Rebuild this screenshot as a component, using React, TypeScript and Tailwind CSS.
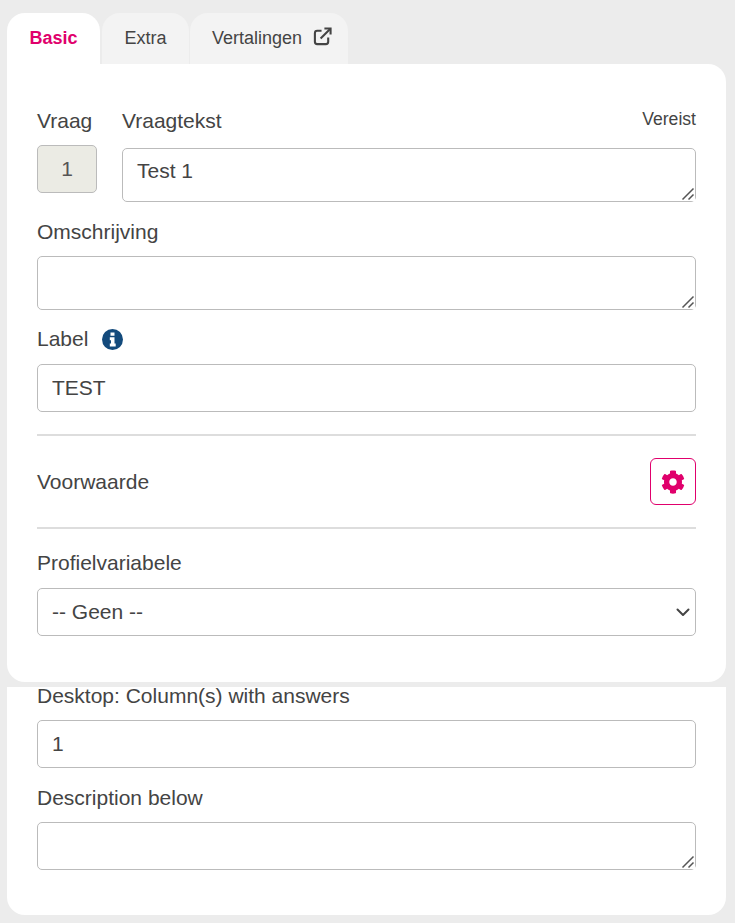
import { FaCog } from "react-icons/fa";

const fieldClass =
  "block w-full rounded-[5px] border border-[#bbbbbb] bg-white px-[14px] text-[21px] text-[#444444] outline-none";

function Grip() {
  return (
    <svg
      viewBox="0 0 14 14"
      className="pointer-events-none absolute bottom-[1px] right-[1px] h-[14px] w-[14px] bg-white"
      stroke="#555555"
      strokeWidth="1.5"
      fill="none"
    >
      <path d="M1.5 12.5 12.5 1.5M7.5 12.5l5-5" />
    </svg>
  );
}

function Area({ value = "", height }: { value?: string; height: string }) {
  return (
    <div className="relative">
      <textarea
        defaultValue={value}
        className={`${fieldClass} ${height} py-[8px] leading-[28px]`}
      />
      <Grip />
    </div>
  );
}

export default function App() {
  return (
    <div className="h-[923px] w-[735px] overflow-hidden bg-[#ececec] pl-[7px] pr-[9px] pt-[13px] font-['Liberation_Sans',Arial,sans-serif] text-[#444444]">
      <div className="flex h-[51px] text-[18px]">
        <div className="flex w-[93px] items-center justify-center rounded-t-[18px] bg-white font-bold text-[#e0006c]">
          Basic
        </div>
        <div className="ml-[2px] flex w-[87px] items-center justify-center rounded-t-[18px] bg-[#f3f3f3]">
          Extra
        </div>
        <div className="ml-[1px] flex w-[158px] items-center gap-[11px] rounded-t-[18px] bg-[#f3f3f3] pl-[22px]">
          Vertalingen
          <svg
            viewBox="0 0 20 20"
            className="mb-[4px] h-[19px] w-[19px]"
            fill="none"
            stroke="#444444"
            strokeWidth="2.2"
          >
            <path d="M16 11v4.500a2.500 2.500 0 0 1-2.500 2.500h-9A2.500 2.500 0 0 1 2 15.500v-9A2.500 2.500 0 0 1 4.500 4H9" />
            <path d="M8 12 18 2" />
            <path d="M12 1.500h6.500V8" />
          </svg>
        </div>
      </div>

      <div className="h-[618px] rounded-[18px] rounded-tl-none bg-white px-[30px] pt-[43px]">
        <div className="flex gap-[25px]">
          <div className="w-[60px] shrink-0">
            <div className="h-[28px] text-[21px] leading-[28px]">Vraag</div>
            <div className="mt-[10px] flex h-[48px] items-center justify-center rounded-[5px] border border-[#bbbbbb] bg-[#ebebe4] text-[21px] text-[#555555]">
              1
            </div>
          </div>
          <div className="min-w-0 flex-1">
            <div className="flex h-[28px] items-start justify-between">
              <span className="text-[21px] leading-[28px]">Vraagtekst</span>
              <span className="text-[17.6px] leading-[24px]">Vereist</span>
            </div>
            <div className="mt-[13px]">
              <Area value="Test 1" height="h-[54px]" />
            </div>
          </div>
        </div>

        <div className="mt-[16px] h-[28px] text-[21px] leading-[28px]">Omschrijving</div>
        <div className="mt-[10px]">
          <Area height="h-[54px]" />
        </div>

        <div className="mt-[15px] flex h-[28px] items-center gap-[14px] text-[21px]">
          Label
          <svg viewBox="0 0 21 21" className="h-[21px] w-[21px]">
            <circle cx="10.500" cy="10.500" r="10.500" fill="#134a7c" />
            <path
              fill="#ffffff"
              d="M8.500 3.500h4v3.200h-4zM7.800 8.200h4.700v6.300h1.200v3H7.800v-3H9v-3.300H7.800z"
            />
          </svg>
        </div>
        <input type="text" defaultValue="TEST" className={`${fieldClass} mt-[11px] h-[48px]`} />

        <div className="mt-[22px] border-t-2 border-[#dddddd]" />
        <div className="mt-[22px] flex h-[47px] items-center justify-between">
          <span className="text-[21px]">Voorwaarde</span>
          <button className="flex h-[47px] w-[46px] items-center justify-center rounded-[6px] border border-[#e0006c] text-[#e0006c]">
            <FaCog className="text-[24px]" />
          </button>
        </div>
        <div className="mt-[22px] border-t-2 border-[#dddddd]" />

        <div className="mt-[20px] h-[28px] text-[21px] leading-[28px]">Profielvariabele</div>
        <div className="relative mt-[11px]">
          <select className={`${fieldClass} h-[48px] appearance-none`}>
            <option>-- Geen --</option>
          </select>
          <svg
            viewBox="0 0 16 16"
            className="pointer-events-none absolute right-[5px] top-[16px] h-[16px] w-[16px]"
            fill="none"
            stroke="#444444"
            strokeWidth="2"
            strokeLinecap="round"
            strokeLinejoin="round"
          >
            <path d="M2.500 5.500 8 11l5.500-5.500" />
          </svg>
        </div>
      </div>

      <div className="mt-[5px] h-[228px] rounded-b-[18px] bg-white px-[30px]">
        <div className="h-[18px] text-[21px] leading-[18px]">Desktop: Column(s) with answers</div>
        <input type="text" defaultValue="1" className={`${fieldClass} mt-[15px] h-[48px]`} />
        <div className="mt-[16px] h-[28px] text-[21px] leading-[28px]">Description below</div>
        <div className="mt-[10px]">
          <Area height="h-[48px]" />
        </div>
      </div>
    </div>
  );
}
